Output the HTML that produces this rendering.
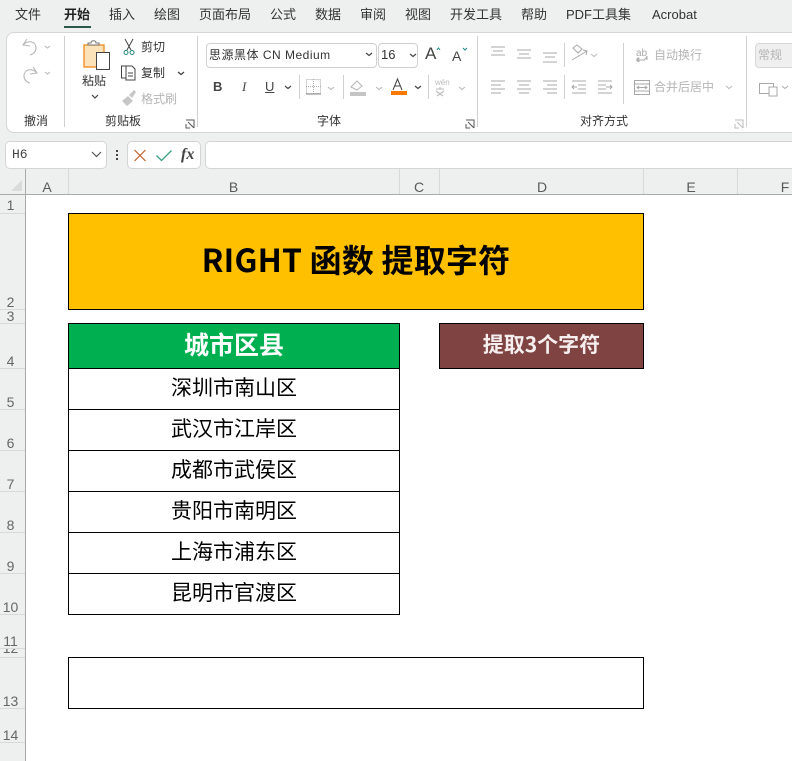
<!DOCTYPE html>
<html lang="zh"><head><meta charset="utf-8">
<style>
html,body{margin:0;padding:0;background:#eef0ef}
#p{position:relative;width:792px;height:761px;overflow:hidden;background:#eef0ef;font-family:"Liberation Sans","Noto Sans CJK SC",sans-serif;color:#333}
#p div,#p span{position:absolute;white-space:nowrap}
.m{font-size:13px;line-height:18px;top:6px;color:#333}
.t{font-size:12px;line-height:16px;color:#333}
.g{color:#b5b5b5}
.l{font-size:12px;line-height:16px;top:113px;color:#333}
.v{width:1px;background:#d0d0d0}
.ch{font-size:14px;line-height:16px;top:179px;color:#5a5a5a;text-align:center}
.rh{font-size:14px;line-height:16px;left:0;width:21px;text-align:center;color:#666}
.rl{left:0;width:25px;height:1px;background:#d8dad9}
.cv{top:169px;width:1px;height:25px;background:#d8dad9}
.c{left:69px;width:330px;height:40px;border-bottom:1px solid #000;font-family:"Noto Sans CJK SC",sans-serif;font-size:21px;line-height:36px;text-align:center;color:#000}
svg{position:absolute;overflow:visible}
</style></head><body><div id="p">
<span class="m" style="left:15px">文件</span>
<span class="m" style="left:64px;font-weight:700;color:#222">开始</span>
<div style="left:64px;top:26px;width:27px;height:2px;background:#2b5a4c"></div>
<span class="m" style="left:109px">插入</span>
<span class="m" style="left:154px">绘图</span>
<span class="m" style="left:199px">页面布局</span>
<span class="m" style="left:270px">公式</span>
<span class="m" style="left:315px">数据</span>
<span class="m" style="left:360px">审阅</span>
<span class="m" style="left:405px">视图</span>
<span class="m" style="left:450px">开发工具</span>
<span class="m" style="left:521px">帮助</span>
<span class="m" style="left:566px">PDF工具集</span>
<span class="m" style="left:652px">Acrobat</span>

<div style="left:6px;top:32px;width:800px;height:99px;background:#fff;border:1px solid #d5d6d5;border-radius:8px 0 0 8px"></div>

<svg width="792" height="135" style="left:0;top:0" fill="none">
<g stroke="#b8b8b8" stroke-width="1.100">
<path d="M27 39l-4 6 7 1M23 45c6-6 13-3 13 3 0 4-3 6-6 7"/>
<path d="M33 67l4 6-7 1M37 73c-6-6-13-3-13 3 0 4 3 6 6 7"/>
<path d="M45 46l2.500 2 2.500-2M45 72l2.500 2 2.500-2"/>
</g>
<rect x="84" y="45" width="20" height="22" fill="#fbe2b8" stroke="#f08a1d" stroke-width="1.300"/>
<path d="M88 45v-2h3c0-3 5-3 5 0h3v2z" fill="#fff" stroke="#777"/>
<rect x="96.500" y="52.500" width="13" height="17" fill="#fff" stroke="#444"/>
<path d="M92 95l3 3 3-3" stroke="#444" stroke-width="1.200"/>
<g stroke="#444" stroke-width="1">
<path d="M125 39l6 11M133 39l-6 11"/>
<circle cx="126" cy="52.500" r="2" stroke="#21867a"/><circle cx="132" cy="52.500" r="2" stroke="#21867a"/>
<path d="M126 66h-4.500v12h4"/>
<path d="M126 66h6l3 3v11h-9z" fill="#fff"/>
<path d="M128 73h5M128 76h5"/>
<path d="M178 72l3 2.500 3-2.500" stroke-width="1.300"/>
</g>
<path d="M122 101l6-5 5 5-6 5zM129 95l5-5 2 2-4 6z" fill="#c6c6c6"/>
<path d="M186 120h8v8M188 122l6 6M186 124v4h4" stroke="#555"/>
<path d="M466 120h8v8M468 122l6 6M466 124v4h4" stroke="#555"/>
<path d="M735 120h8v8M737 122l6 6M735 124v4h4" stroke="#bbb"/>
<g stroke="#444" stroke-width="1.200">
<path d="M366 53l3 2.500 3-2.500M410 54l3 2.500 3-2.500M285 86l3 2.500 3-2.500M415 86l3 2.500 3-2.500"/>
</g>
<path d="M437 50l1.500-2 1.500 2M463 48l2 2 2-2" stroke="#1d8a85"/>
<rect x="306.500" y="79.500" width="14" height="14" stroke="#aaa" stroke-dasharray="1 1"/>
<path d="M306 86.500h15M313.500 79v15" stroke="#aaa" stroke-dasharray="1 1"/>
<path d="M306 94h15" stroke="#888"/>
<path d="M351 87l6-6 5 5-5 4z" stroke="#b5b5b5"/><rect x="350" y="92" width="16" height="4" fill="#c4c4c4"/>
<path d="M393 90l4.500-11 4.500 11M394.500 86h6" stroke="#444"/>
<rect x="391" y="91" width="16" height="4" fill="#f87a00"/>
<g stroke="#bbb" stroke-width="1.100">
<path d="M328 87l3 2.500 3-2.500M376 87l3 2.500 3-2.500M459 87l3 2.500 3-2.500M591 54l3 2.500 3-2.500M726 86l3 2.500 3-2.500"/>
<path d="M436 89h8M440 87v2M437 96l7-5M443 96l-7-5" />
</g>
<g stroke="#a8a8a8" stroke-width="1">
<path d="M491 47h14M493 51h10M491 55h14M517 50h14M519 54h10M517 58h14M543 53h14M545 57h10M543 62h14"/>
<path d="M491 81h14M491 85h10M491 89h14M491 93h10M517 81h14M519 85h10M517 89h14M519 93h10M543 81h14M547 85h10M543 89h14M547 93h10"/>
<path d="M572 81h14M578 85h8M578 89h8M572 93h14M572 87h5M574 85l-2 2 2 2"/>
<path d="M598 81h14M598 85h8M598 89h8M598 93h14M606 87h6M610 85l2 2-2 2"/>
<path d="M572 60l15-9M583 50l4 1-1 4M573 48l5 5 4-4-5-4z"/>
<path d="M637 60h7l3-3M647 60v-4M639 61l-2-1 2-2"/>
<rect x="634.500" y="80.500" width="15" height="14"/><path d="M634 84h16M634 91h16M637 87.500h10M639 86l-2 1.500 2 1.500M645 86l2 1.500-2 1.500"/>
<rect x="759.500" y="83.500" width="14" height="10"/><rect x="769" y="87" width="8" height="9" fill="#fff"/>
</g>
<text x="636" y="56" font-size="10" fill="#aaa" font-family="Liberation Sans">ab</text>
<text x="636" y="62" font-size="8" fill="#aaa" font-family="Liberation Sans">c</text>
<path d="M782 86l3 2.500 3-2.500" stroke="#aaa"/>
</svg>

<div class="v" style="left:64px;top:36px;height:91px"></div>
<div class="v" style="left:197px;top:36px;height:91px"></div>
<div class="v" style="left:477px;top:36px;height:91px"></div>
<div class="v" style="left:746px;top:36px;height:91px"></div>
<div class="v" style="left:299px;top:75px;height:24px"></div>
<div class="v" style="left:343px;top:75px;height:24px"></div>
<div class="v" style="left:428px;top:75px;height:24px"></div>
<div class="v" style="left:564px;top:43px;height:24px"></div>
<div class="v" style="left:564px;top:75px;height:24px"></div>
<div class="v" style="left:623px;top:43px;height:61px"></div>

<span class="t" style="left:82px;top:73px">粘贴</span>
<span class="t" style="left:141px;top:39px">剪切</span>
<span class="t" style="left:141px;top:65px">复制</span>
<span class="t g" style="left:141px;top:91px">格式刷</span>
<span class="l" style="left:24px">撤消</span>
<span class="l" style="left:105px">剪贴板</span>
<span class="l" style="left:317px">字体</span>
<span class="l" style="left:580px">对齐方式</span>

<div style="left:206px;top:43px;width:169px;height:23px;border:1px solid #d0d0d0;border-radius:4px;background:#fff"></div>
<span class="t" style="left:209px;top:47px;letter-spacing:.5px">思源黑体 CN Medium</span>
<div style="left:378px;top:43px;width:38px;height:23px;border:1px solid #d0d0d0;border-radius:4px;background:#fff"></div>
<span class="t" style="left:381px;top:47px;font-size:13px">16</span>
<svg width="792" height="135" style="left:0;top:0" fill="none"><path d="M366 53l3 2.500 3-2.500M410 54l3 2.500 3-2.500" stroke="#444" stroke-width="1.200"/></svg>
<span style="left:425px;top:44px;font-size:17px;line-height:20px;color:#444">A</span>
<span style="left:452px;top:46px;font-size:14px;line-height:20px;color:#444">A</span>
<span class="t" style="left:213px;top:79px;font-size:13px;font-weight:700;color:#444">B</span>
<span class="t" style="left:242px;top:79px;font-size:13px;font-style:italic;font-family:'Liberation Serif',serif;color:#444">I</span>
<span class="t" style="left:265px;top:79px;font-size:13px;text-decoration:underline;color:#444">U</span>
<span style="left:435px;top:78px;font-size:8px;line-height:9px;color:#bbb">wén</span>

<span class="t g" style="left:654px;top:47px">自动换行</span>
<span class="t g" style="left:654px;top:79px">合并后居中</span>
<div style="left:755px;top:43px;width:50px;height:23px;border:1px solid #d8d8d8;border-radius:4px;background:#eeefee"></div>
<span class="t g" style="left:758px;top:47px">常规</span>

<div style="left:5px;top:141px;width:100px;height:26px;background:#fff;border:1px solid #d3d4d3;border-radius:5px"></div>
<span style="left:12px;top:147px;font-size:13px;line-height:16px;font-family:'Liberation Mono',monospace;color:#444">H6</span>
<div style="left:127px;top:141px;width:72px;height:26px;background:#fff;border:1px solid #d3d4d3;border-radius:5px"></div>
<div style="left:205px;top:141px;width:600px;height:26px;background:#fff;border:1px solid #d3d4d3;border-radius:5px"></div>
<svg width="210" height="30" style="left:0;top:141px" fill="none">
<path d="M92 11l4.500 4.500 4.500-4.500" stroke="#555" stroke-width="1.200"/>
<path d="M117 10h0M117 14h0M117 18h0" stroke="#444" stroke-width="2" stroke-linecap="square"/>
<path d="M134.500 9l11 11M145.500 9l-11 11" stroke="#c2602a" stroke-width="1.200"/>
<path d="M156.500 14.500l5 5 10-10" stroke="#36a184" stroke-width="1.300"/>
</svg>
<span style="left:181px;top:146px;font-size:16px;line-height:18px;font-style:italic;font-weight:700;font-family:'Liberation Serif',serif;color:#444">fx</span>

<svg width="30" height="20" style="left:0;top:175px"><path d="M22 5v11H11z" fill="#d9dbda"/></svg>
<div style="left:25px;top:169px;width:1px;height:592px;background:#a9abaa"></div>
<div style="left:0;top:194px;width:792px;height:1px;background:#a9abaa"></div>
<div style="left:26px;top:195px;width:766px;height:566px;background:#fff"></div>

<div class="cv" style="left:68px"></div><div class="cv" style="left:399px"></div><div class="cv" style="left:439px"></div><div class="cv" style="left:643px"></div><div class="cv" style="left:737px"></div>
<span class="ch" style="left:26px;width:42px">A</span>
<span class="ch" style="left:68px;width:331px">B</span>
<span class="ch" style="left:399px;width:40px">C</span>
<span class="ch" style="left:440px;width:204px">D</span>
<span class="ch" style="left:644px;width:94px">E</span>
<span class="ch" style="left:777px;width:16px">F</span>

<div class="rl" style="top:213px"></div><div class="rl" style="top:309px"></div><div class="rl" style="top:323px"></div><div class="rl" style="top:368px"></div><div class="rl" style="top:409px"></div><div class="rl" style="top:450px"></div><div class="rl" style="top:491px"></div><div class="rl" style="top:532px"></div><div class="rl" style="top:573px"></div><div class="rl" style="top:614px"></div><div class="rl" style="top:648px"></div><div class="rl" style="top:657px"></div><div class="rl" style="top:708px"></div><div class="rl" style="top:742px"></div>
<span class="rh" style="top:197px">1</span>
<span class="rh" style="top:294px">2</span>
<span class="rh" style="top:308px">3</span>
<span class="rh" style="top:353px">4</span>
<span class="rh" style="top:394px">5</span>
<span class="rh" style="top:435px">6</span>
<span class="rh" style="top:476px">7</span>
<span class="rh" style="top:517px">8</span>
<span class="rh" style="top:558px">9</span>
<span class="rh" style="top:599px">10</span>
<span class="rh" style="top:633px">11</span>
<div style="left:0;top:649px;width:25px;height:8px;overflow:hidden"><span class="rh" style="top:-9px;left:0">12</span></div>
<span class="rh" style="top:693px">13</span>
<span class="rh" style="top:727px">14</span>

<div style="left:68px;top:213px;width:574px;height:95px;background:#ffc000;border:1px solid #000;font-family:'Noto Sans CJK SC',sans-serif;font-size:32px;font-weight:700;letter-spacing:.2px;line-height:91px;text-align:center;color:#000">RIGHT 函数 提取字符</div>

<div style="left:68px;top:323px;width:330px;height:44px;background:#00b050;border:1px solid #000;font-family:'Noto Sans CJK SC',sans-serif;font-size:25px;font-weight:700;line-height:40px;text-align:center;color:#fff">城市区县</div>
<div style="left:439px;top:323px;width:203px;height:44px;background:#7f4341;border:1px solid #000;font-family:'Noto Sans CJK SC',sans-serif;font-size:21px;font-weight:700;line-height:40px;text-align:center;color:#f4eeee">提取3个字符</div>

<div style="left:68px;top:368px;width:332px;height:247px;border-left:1px solid #000;border-right:1px solid #000;box-sizing:border-box"></div>
<div class="c" style="top:369px">深圳市南山区</div>
<div class="c" style="top:410px">武汉市江岸区</div>
<div class="c" style="top:451px">成都市武侯区</div>
<div class="c" style="top:492px">贵阳市南明区</div>
<div class="c" style="top:533px">上海市浦东区</div>
<div class="c" style="top:574px">昆明市官渡区</div>

<div style="left:68px;top:657px;width:574px;height:50px;border:1px solid #000;background:#fff"></div>
</div></body></html>
